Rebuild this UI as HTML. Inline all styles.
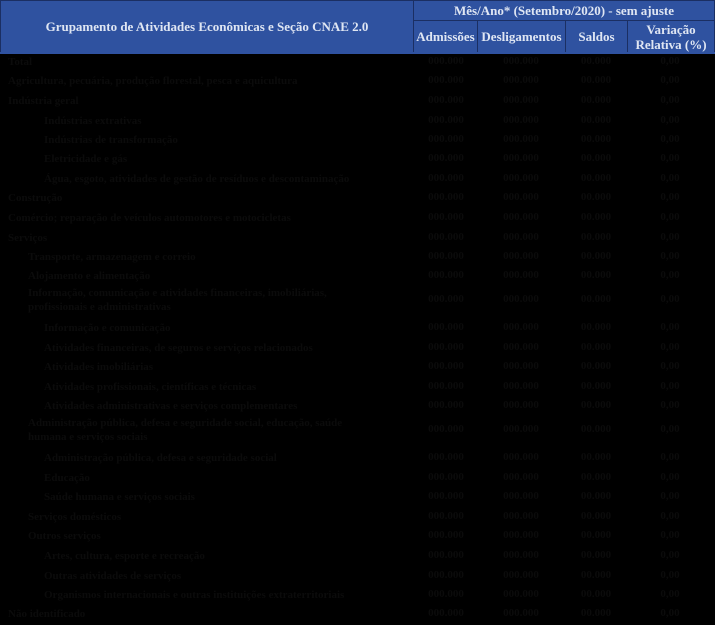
<!DOCTYPE html>
<html><head><meta charset="utf-8"><style>
body{margin:0;width:715px;height:625px;background:#000;overflow:hidden;font-family:"Liberation Serif",serif;}
.h{position:absolute;background:#2f52a0;color:#dfe6f3;font-weight:bold;font-size:13px;display:flex;align-items:center;justify-content:center;text-align:center;line-height:15px;box-sizing:border-box;border:1px solid #1b2f63;}
.r{position:absolute;left:0;width:715px;font-size:11px;color:#0b0b0b;font-weight:bold;}
.r span{position:absolute;top:0;}
.n{text-align:center;width:60px;}
</style></head><body>
<div class="h" style="left:0;top:0;width:414px;height:53px;">Grupamento de Atividades Econômicas e Seção CNAE 2.0</div>
<div class="h" style="left:413px;top:0;width:302px;height:21px;">Mês/Ano* (Setembro/2020) - sem ajuste</div>
<div class="h" style="left:413px;top:20px;width:65px;height:33px;">Admissões</div>
<div class="h" style="left:477px;top:20px;width:89px;height:33px;">Desligamentos</div>
<div class="h" style="left:565px;top:20px;width:63px;height:33px;">Saldos</div>
<div class="h" style="left:627px;top:20px;width:88px;height:33px;">Variação<br>Relativa (%)</div>
<div style="position:absolute;left:0;top:52px;width:715px;height:2px;background:#2f52a0"></div>
<div id="rows"></div>
<script>
var R=[[62,8,"Total"],[81,8,"Agricultura, pecuária, produção florestal, pesca e aquicultura"],[101,8,"Indústria geral"],[121,44,"Indústrias extrativas"],[140,44,"Indústrias de transformação"],[159,44,"Eletricidade e gás"],[179,44,"Água, esgoto, atividades de gestão de resíduos e descontaminação"],[198,8,"Construção"],[218,8,"Comércio; reparação de veículos automotores e motocicletas"],[238,8,"Serviços"],[257,28,"Transporte, armazenagem e correio"],[276,28,"Alojamento e alimentação"],[293,28,"Informação, comunicação e atividades financeiras, imobiliárias,",1],[328,44,"Informação e comunicação"],[348,44,"Atividades financeiras, de seguros e serviços relacionados"],[367,44,"Atividades imobiliárias"],[387,44,"Atividades profissionais, científicas e técnicas"],[406,44,"Atividades administrativas e serviços complementares"],[423,28,"Administração pública, defesa e seguridade social, educação, saúde",2],[458,44,"Administração pública, defesa e seguridade social"],[478,44,"Educação"],[497,44,"Saúde humana e serviços sociais"],[517,28,"Serviços domésticos"],[536,28,"Outros serviços"],[556,44,"Artes, cultura, esporte e recreação"],[576,44,"Outras atividades de serviços"],[595,44,"Organismos internacionais e outras instituições extraterritoriais"],[614,8,"Não identificado"]];
var h="";R.forEach(function(a){var y=a[0]-7;var t=a[2];if(a[3]==1)t+="<br>profissionais e administrativas";if(a[3]==2)t+="<br>humana e serviços sociais";var ny=a[3]?7:0;
h+='<div class="r" style="top:'+y+'px"><span style="left:'+a[1]+'px;line-height:14px">'+t+'</span><span class="n" style="left:416px;top:'+ny+'px">000.000</span><span class="n" style="left:491px;top:'+ny+'px">000.000</span><span class="n" style="left:566px;top:'+ny+'px">00.000</span><span class="n" style="left:640px;top:'+ny+'px">0,00</span></div>';});
document.getElementById("rows").innerHTML=h;
</script>
</body></html>
